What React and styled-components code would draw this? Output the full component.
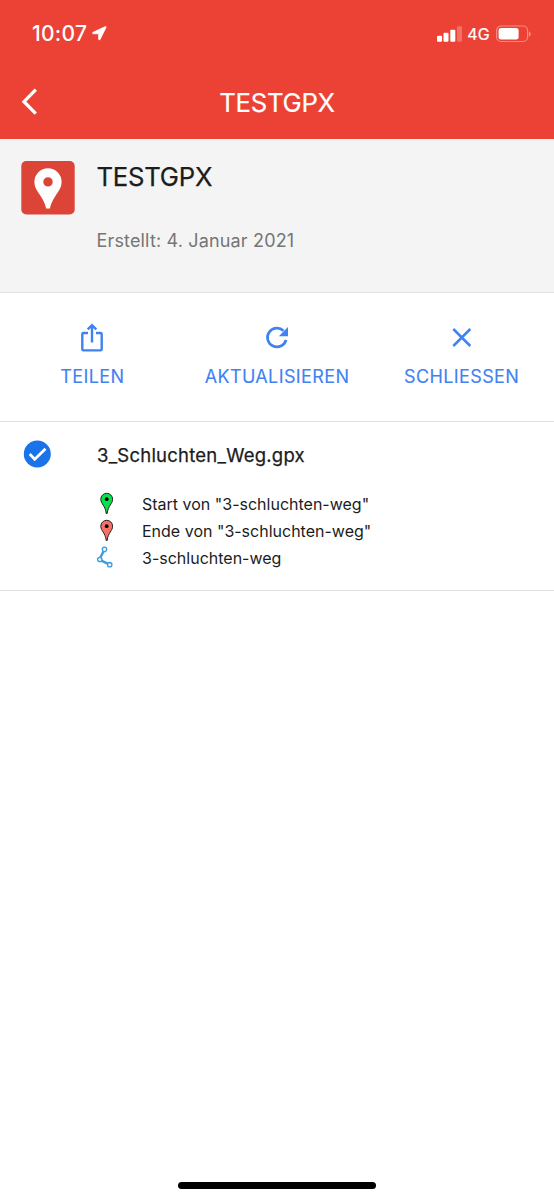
import React from "react";
import styled, { createGlobalStyle } from "styled-components";

const GlobalStyle = createGlobalStyle`
  *, *::before, *::after { box-sizing: border-box; }
  body {
    margin: 0;
    background: #fff;
    font-family: Inter, "Liberation Sans", sans-serif;
    color: #1c1c1c;
  }
  svg { display: block; flex: none; }
`;

const Screen = styled.div`
  width: 554px;
  height: 1200px;
  display: flex;
  flex-direction: column;
  background: #fff;
  overflow: hidden;
`;

const Text = styled.span`
  display: block;
  white-space: nowrap;
  font-size: ${(p) => p.$size}px;
  line-height: ${(p) => p.$line || 24}px;
  font-weight: ${(p) => p.$weight || 400};
  letter-spacing: ${(p) => p.$track || 0}px;
  color: ${(p) => p.$color || "#1c1c1c"};
  -webkit-text-stroke: ${(p) => p.$stroke || 0}px;
`;

const Header = styled.header`
  height: 139px;
  background: #ec4235;
  color: #fff;
`;

const StatusBar = styled.div`
  display: flex;
  align-items: center;
  height: 67px;
  padding: 0 23px 0 32px;
`;

const StatusIcons = styled.div`
  display: flex;
  align-items: center;
  margin-left: auto;
`;

const NavBar = styled.div`
  display: grid;
  grid-template-columns: 60px 1fr 60px;
  align-items: center;
  justify-items: center;
  height: 70px;
`;

const Info = styled.section`
  display: flex;
  height: 154px;
  padding: 22px 21px 0;
  background: #f4f4f4;
  border-bottom: 1px solid #e3e3e3;
`;

const InfoText = styled.div`
  display: flex;
  flex-direction: column;
  gap: 36px;
  padding-left: 21.5px;
`;

const Actions = styled.section`
  display: grid;
  grid-template-columns: repeat(3, 1fr);
  height: 129px;
  border-bottom: 1px solid #e0e0e0;
`;

const Action = styled.button`
  display: flex;
  flex-direction: column;
  align-items: center;
  gap: 9px;
  padding: 29px 0 0;
  border: 0;
  background: none;
  font-family: inherit;
`;

const Layer = styled.section`
  display: grid;
  grid-template-columns: 97px 1fr;
  height: 169px;
  padding-top: 18px;
  border-bottom: 1px solid #e0e0e0;
`;

const CheckCell = styled.div`
  padding: 0 0 0 23px;
`;

const FeatureList = styled.ul`
  list-style: none;
  margin: 20px 0 0;
  padding: 0;
`;

const Feature = styled.li`
  display: flex;
  align-items: center;
  gap: 25px;
  height: 27px;
`;

const HomeArea = styled.footer`
  display: flex;
  justify-content: center;
  margin-top: auto;
  padding-bottom: 11px;
`;

const HomeBar = styled.div`
  width: 198px;
  height: 7px;
  border-radius: 4px;
  background: #000;
`;

const LocationIcon = styled.svg`
  margin: 0 0 1px 4.5px;
`;

const Blue = "#3f82f3";

function Pin({ fill }) {
  return (
    <svg width="20" height="24" viewBox="0 0 20 24">
      <path d="M9.7 1.3a5.900 5.900 0 0 0-5.900 5.900c0 4.800 4.600 6.200 5.400 14.300h1c.8-8.100 5.400-9.500 5.400-14.300a5.900 5.900 0 0 0-5.900-5.900z" fill={fill} stroke="#222" strokeWidth="1" />
      <circle cx="9.700" cy="7.200" r="1.900" fill="#000" />
    </svg>
  );
}

function Track() {
  return (
    <svg width="20" height="24" viewBox="0 0 20 24" fill="none" stroke="#3d9ddb">
      <path d="M7.400 3.600L2.300 13.700 12.700 18.700" strokeWidth="2.400" />
      <g fill="#e6f3fc" strokeWidth="1.300">
        <circle cx="7.500" cy="3.400" r="2.200" />
        <circle cx="2.700" cy="13.500" r="2.200" />
        <circle cx="12.700" cy="18.700" r="2.200" />
      </g>
    </svg>
  );
}

const features = [
  { icon: <Pin fill="#0bdf4c" />, label: 'Start von "3-schluchten-weg"' },
  { icon: <Pin fill="#fb7064" />, label: 'Ende von "3-schluchten-weg"' },
  { icon: <Track />, label: "3-schluchten-weg" },
];

const actions = [
  {
    label: "TEILEN",
    icon: (
      <svg width="32" height="32" viewBox="0 0 32 32" fill="none" stroke={Blue} strokeWidth="2.400">
        <path d="M12 11H7.500Q6.300 11 6.300 12.200V27.200Q6.300 28.400 7.500 28.400H24.500Q25.700 28.400 25.700 27.200V12.200Q25.700 11 24.500 11H20" />
        <path d="M16 20.500V3.500M11.700 7.400L16 3.100l4.300 4.300" />
      </svg>
    ),
  },
  {
    label: "AKTUALISIEREN",
    icon: (
      <svg width="32" height="32" viewBox="0 0 32 32">
        <path d="M22.500 8.800A9.400 9.400 0 1 0 25 17.800" fill="none" stroke={Blue} strokeWidth="2.700" />
        <path d="M27 5v9.200h-9.200z" fill={Blue} />
      </svg>
    ),
  },
  {
    label: "SCHLIESSEN",
    icon: (
      <svg width="32" height="32" viewBox="0 0 32 32" fill="none" stroke={Blue} strokeWidth="2.500">
        <path d="M7.300 7l17 17M24.300 7l-17 17" />
      </svg>
    ),
  },
];

export default function App() {
  return (
    <Screen>
      <GlobalStyle />
      <Header>
        <StatusBar>
          <Text $size={21} $weight={500} $color="#fff" $track={0.300}>10:07</Text>
          <LocationIcon width="15" height="15" viewBox="0 0 15 15">
            <path d="M13.300.6L1 6.300c-.8.400-.6 1.500.3 1.500h5.300v5.300c0 .9 1.100 1.100 1.500.3L14.100 1.400c.3-.6-.2-1.100-.8-.8z" fill="#fff" stroke="#fff" strokeWidth=".7" />
          </LocationIcon>
          <StatusIcons>
            <svg width="30" height="18" viewBox="0 0 30 18" fill="#fff">
              <rect x="0" y="10.800" width="5" height="6" rx="1" />
              <rect x="6.500" y="7.800" width="5" height="9" rx="1" />
              <rect x="13.300" y="4.800" width="5" height="12" rx="1" />
              <rect x="20" y="1.300" width="5" height="15.500" rx="1" opacity=".25" />
            </svg>
            <Text $size={16} $weight={400} $stroke={0.200} $track={0.200} $color="#fff">4G</Text>
            <svg width="41" height="18" viewBox="0 0 41 18">
              <rect x="6.600" y="1" width="31" height="15.500" rx="4.500" fill="none" stroke="#fff" strokeOpacity=".4" strokeWidth="1.200" />
              <rect x="8.600" y="3" width="20" height="11.500" rx="2.500" fill="#fff" />
              <path d="M39 6.500v5q1.700-.8 1.700-2.500t-1.700-2.500z" fill="#fff" opacity=".45" />
            </svg>
          </StatusIcons>
        </StatusBar>
        <NavBar>
          <svg width="20" height="30" viewBox="0 0 20 30" fill="none" stroke="#fff" strokeWidth="3.300">
            <path d="M15.800 2.700L4 14.700l11.800 12" />
          </svg>
          <Text $size={25.700} $stroke={0.200} $line={33} $track={-0.250} $color="#fff">TESTGPX</Text>
        </NavBar>
      </Header>

      <Info>
        <svg width="54" height="54" viewBox="0 0 54 54">
          <rect x=".3" y="0" width="53.400" height="53.400" rx="5" fill="#db4437" />
          <path fillRule="evenodd" d="M27 7.300a13.600 13.600 0 0 0-13.600 13.600c0 5.500 3.300 9.600 6.200 14 2.700 4.200 4.500 7.600 5.500 12.600h3.800c1-5 2.800-8.400 5.500-12.600 2.900-4.400 6.200-8.500 6.200-14A13.600 13.600 0 0 0 27 7.300zm0 8.900a4.700 4.700 0 1 1 0 9.400 4.700 4.700 0 0 1 0-9.400z" fill="#fff" />
        </svg>
        <InfoText>
          <Text $size={25.700} $stroke={0.250} $line={32} $track={-0.250}>TESTGPX</Text>
          <Text $size={18} $track={0.160} $color="#757575">Erstellt: 4. Januar 2021</Text>
        </InfoText>
      </Info>

      <Actions>
        {actions.map((a) => (
          <Action key={a.label}>
            {a.icon}
            <Text $size={18} $stroke={0.120} $line={27} $track={0.380} $color={Blue}>{a.label}</Text>
          </Action>
        ))}
      </Actions>

      <Layer>
        <CheckCell>
          <svg width="28" height="28" viewBox="0 0 28 28">
            <circle cx="14.300" cy="14" r="13.500" fill="#1a73e8" />
            <path d="M6.700 14l5 5.300L22.500 8.800" fill="none" stroke="#fff" strokeWidth="2.700" />
          </svg>
        </CheckCell>
        <div>
          <Text $size={18.500} $stroke={0.250} $line={30} $track={0.230}>3_Schluchten_Weg.gpx</Text>
          <FeatureList>
            {features.map((f) => (
              <Feature key={f.label}>
                {f.icon}
                <Text $size={16}>{f.label}</Text>
              </Feature>
            ))}
          </FeatureList>
        </div>
      </Layer>

      <HomeArea>
        <HomeBar />
      </HomeArea>
    </Screen>
  );
}
